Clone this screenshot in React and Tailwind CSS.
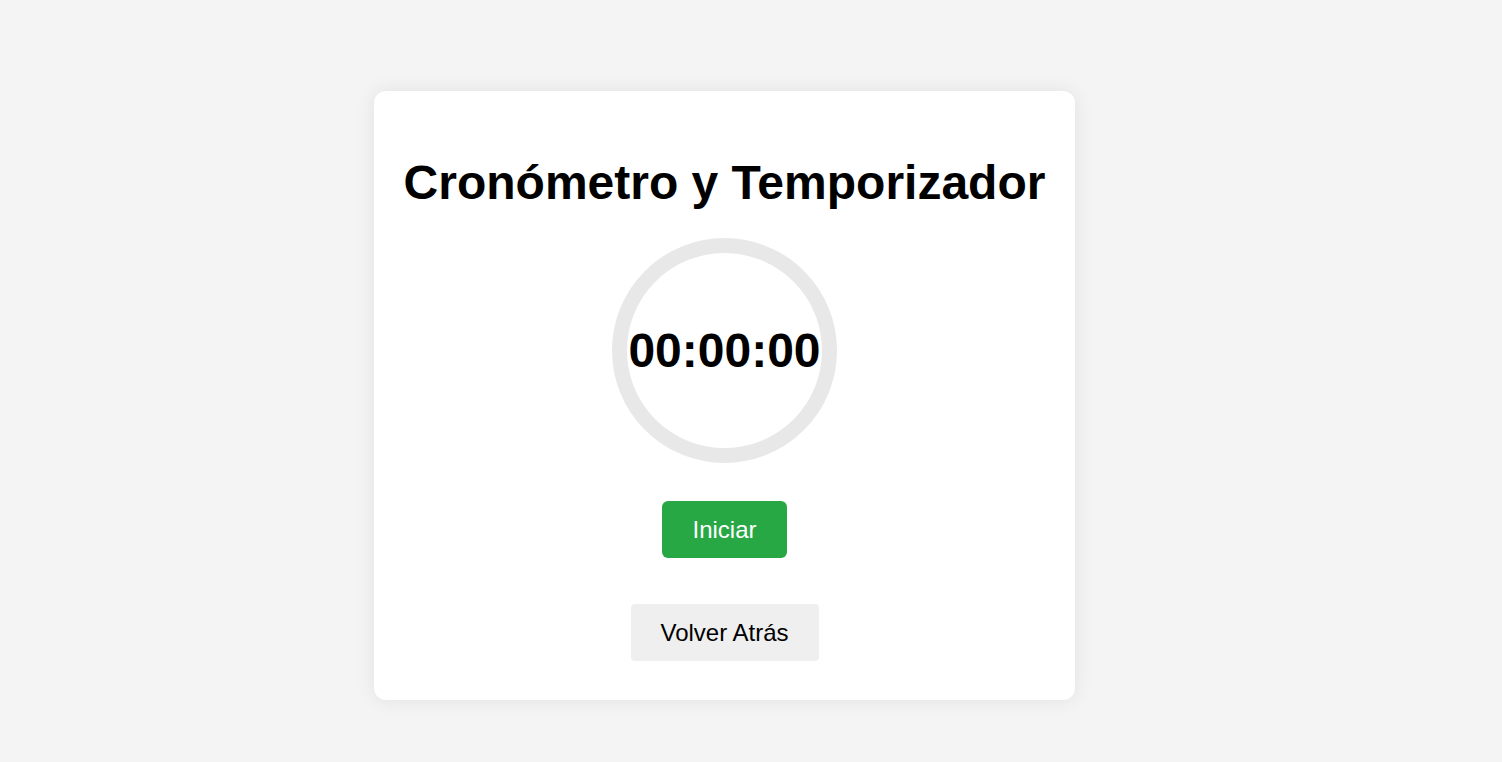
import React, { useState, useEffect, useRef } from 'react';

function formatTime(totalSeconds) {
  const h = String(Math.floor(totalSeconds / 3600)).padStart(2, '0');
  const m = String(Math.floor((totalSeconds % 3600) / 60)).padStart(2, '0');
  const s = String(totalSeconds % 60).padStart(2, '0');
  return `${h}:${m}:${s}`;
}

export default function App() {
  const [seconds, setSeconds] = useState(0);
  const [running, setRunning] = useState(false);
  const timerRef = useRef(null);

  useEffect(() => {
    if (running) {
      timerRef.current = setInterval(() => setSeconds(prev => prev + 1), 1000);
    }
    return () => clearInterval(timerRef.current);
  }, [running]);

  return (
    <div className="min-h-[762px] bg-[#f4f4f4] pt-[91px] pl-[374px] font-['Liberation_Sans',Arial,sans-serif]">
      {/* Card */}
      <div className="w-[701px] bg-white rounded-[12px] shadow-[0_0_20px_rgba(0,0,0,0.08)] pt-[64px] pb-[39px] flex flex-col items-center">
        <h1 className="text-[48px] leading-[1.15] font-bold text-black">
          Cronómetro y Temporizador
        </h1>

        {/* Timer ring */}
        <div className="mt-[28px] w-[225px] h-[225px] rounded-full border-[15px] border-[#e8e8e8] flex items-center justify-center">
          <span className="text-[48px] font-bold text-black leading-none">
            {formatTime(seconds)}
          </span>
        </div>

        <button
          type="button"
          onClick={() => setRunning(r => !r)}
          className="mt-[38px] h-[57px] px-[30px] bg-[#28a745] text-white text-[24px] rounded-[6px]"
        >
          {running ? 'Pausar' : 'Iniciar'}
        </button>

        <button
          type="button"
          className="mt-[46px] h-[57px] w-[188px] bg-[#efefef] text-black text-[24px] rounded-[4px]"
        >
          Volver Atrás
        </button>
      </div>
    </div>
  );
}
